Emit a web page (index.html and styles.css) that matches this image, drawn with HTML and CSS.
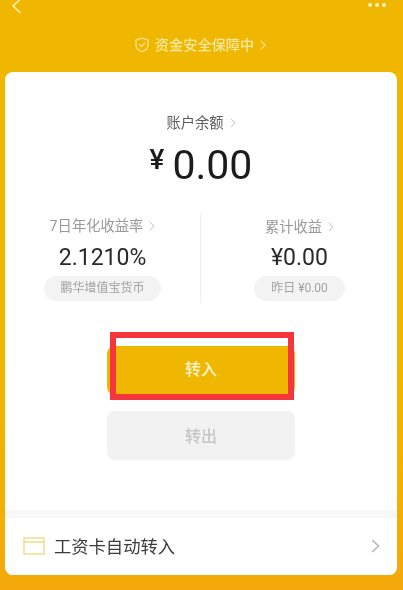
FILE: index.html
```html
<!DOCTYPE html>
<html lang="zh">
<head>
<meta charset="utf-8">
<title>账户余额</title>
<link rel="stylesheet" href="styles.css">
</head>
<body>
<div class="page">
  <header class="header">
    <div class="topbar">
      <svg class="back" viewBox="0 0 12 16" aria-hidden="true"><path d="M10.5 1 3 8l7.5 7"/></svg>
      <div class="dots"><i></i><i></i><i></i></div>
    </div>
    <div class="safe">
      <svg class="shield" viewBox="0 0 14 16" aria-hidden="true"><path d="M7 1.2 13 3v5.2c0 3-2.6 5.2-6 6.6-3.4-1.4-6-3.600-6-6.600V3z"/><path d="M4.300 7.200 6.600 9.400 10 5.800"/></svg>
      <span>资金安全保障中</span>
      <svg class="chev chev-safe" viewBox="0 0 7 12" aria-hidden="true"><path d="M1 1l5 5-5 5"/></svg>
    </div>
  </header>

  <main class="card">
    <section class="balance">
      <div class="balance-label"><span>账户余额</span><svg class="chev chev-gray" viewBox="0 0 7 12" aria-hidden="true"><path d="M1 1l5 5-5 5"/></svg></div>
      <div class="amount"><span class="yen">¥</span><span class="value">0.00</span></div>
    </section>

    <section class="stats">
      <div class="stat">
        <div class="stat-label"><span>7日年化收益率</span><svg class="chev chev-gray" viewBox="0 0 7 12" aria-hidden="true"><path d="M1 1l5 5-5 5"/></svg></div>
        <div class="stat-value">2.1210%</div>
        <div class="pill pill-fund">鹏华增值宝货币</div>
      </div>
      <div class="divider"></div>
      <div class="stat stat-right">
        <div class="stat-label stat-label-low"><span>累计收益</span><svg class="chev chev-gray" viewBox="0 0 7 12" aria-hidden="true"><path d="M1 1l5 5-5 5"/></svg></div>
        <div class="stat-value">¥0.00</div>
        <div class="pill pill-day">昨日 ¥0.00</div>
      </div>
    </section>

    <section class="actions">
      <div class="btn-wrap">
        <button class="btn btn-in">转入</button>
        <div class="highlight"></div>
      </div>
      <button class="btn btn-out">转出</button>
    </section>

    <div class="band"></div>

    <section class="row">
      <svg class="card-icon" viewBox="0 0 22 18" aria-hidden="true"><rect x="1" y="1" width="20" height="16"/><path d="M1 5h20"/></svg>
      <span class="row-text">工资卡自动转入</span>
      <svg class="chev chev-row" viewBox="0 0 9 14" aria-hidden="true"><path d="M1.200 1 7.500 7l-6.300 6"/></svg>
    </section>
  </main>
</div>
</body>
</html>
```

FILE: styles.css
```css
* { box-sizing: border-box; }
html, body { margin: 0; padding: 0; }
body {
  width: 403px;
  height: 590px;
  overflow: hidden;
  font-family: Roboto, "Noto Sans CJK SC", sans-serif;
  background: linear-gradient(180deg, #efb700 0, #efb700 60%, #f2b005 82%, #f5a90c 100%);
}
.page {
  height: 590px;
  display: flex;
  flex-direction: column;
  filter: blur(0.5px);
}
.header { height: 72px; flex: none; }
.topbar {
  height: 14px;
  padding: 0 17px 0 10px;
  display: flex;
  justify-content: space-between;
  overflow: hidden;
}
.back {
  width: 12px;
  height: 16px;
  margin-top: -2px;
  fill: none;
  stroke: #fdf1c4;
  stroke-width: 1.500;
}
.dots { display: flex; gap: 3px; margin-top: 3px; }
.dots i {
  display: block;
  width: 4px;
  height: 4px;
  border-radius: 50%;
  background: #fdf3d0;
}
.safe {
  margin-top: 22px;
  height: 18px;
  padding-right: 2px;
  display: flex;
  align-items: center;
  justify-content: center;
  color: #fae7a0;
  font-size: 14.200px;
  line-height: 18px;
  font-weight: 500;
}
.shield {
  width: 14px;
  height: 16px;
  margin-right: 6px;
  fill: none;
  stroke: #fae7a0;
  stroke-width: 1.200;
}
.chev { fill: none; display: block; flex: none; }
.chev-safe {
  width: 6px;
  height: 10px;
  margin-left: 6px;
  stroke: #fae7a0;
  stroke-width: 1.300;
}
.chev-gray {
  width: 6px;
  height: 10px;
  margin-left: 6px;
  stroke: #c4c4c4;
  stroke-width: 1.200;
}

.card {
  flex: none;
  height: 503px;
  margin: 0 6px 0 5px;
  background: #fff;
  border-radius: 8px;
  overflow: hidden;
  display: flex;
  flex-direction: column;
}
.balance {
  height: 142px;
  flex: none;
  padding-top: 41px;
  display: flex;
  flex-direction: column;
  align-items: center;
}
.balance-label {
  display: flex;
  align-items: center;
  height: 20px;
  font-size: 14.300px;
  line-height: 20px;
  color: #5c5c5c;
}
.amount {
  margin-top: 8px;
  display: flex;
  align-items: flex-start;
  color: #1c1c1c;
  height: 48px;
  line-height: 48px;
}
.yen {
  font-size: 28px;
  font-weight: 500;
  line-height: 38px;
  margin-right: 8px;
}
.value { font-size: 41px; }

.stats {
  height: 89px;
  flex: none;
  display: flex;
}
.stat {
  width: 195px;
  flex: none;
  display: flex;
  flex-direction: column;
  align-items: center;
}
.stat-right { width: 196px; padding-left: 1px; }
.divider {
  width: 1px;
  flex: none;
  background: #efefef;
}
.stat-label {
  height: 20px;
  padding-top: 3px;
  display: flex;
  align-items: center;
  font-size: 14.300px;
  color: #999;
  line-height: 20px;
}
.stat-label-low { padding-top: 5px; }
.stat-value {
  margin-top: 9px;
  height: 30px;
  line-height: 30px;
  font-size: 23px;
  color: #2a2a2a;
}
.pill {
  margin-top: 3px;
  height: 25px;
  line-height: 25px;
  border-radius: 13px;
  background: #f3f3f3;
  color: #a2a2a2;
  font-size: 12px;
  text-align: center;
}
.pill-fund { width: 117px; }
.pill-day { width: 91px; }

.actions {
  flex: none;
  height: 207px;
  padding-top: 43px;
  display: flex;
  flex-direction: column;
  align-items: center;
  gap: 16px;
}
.btn-wrap { position: relative; width: 188px; height: 49px; flex: none; }
.btn {
  display: block;
  width: 188px;
  height: 49px;
  flex: none;
  border: 0;
  padding: 0 0 2px;
  border-radius: 8px;
  font-family: inherit;
  font-size: 16px;
  font-weight: 500;
}
.btn-in { background: #efb700; color: #fdf3d2; padding-bottom: 5px; }
.btn-out { background: #f2f2f2; color: #c6c6c6; }
.highlight {
  position: absolute;
  left: 3px;
  top: -14px;
  width: 184px;
  height: 68px;
  border: 6.500px solid #f5363c;
}

.band { height: 8px; flex: none; background: #f8f8f8; }
.row {
  flex: 1;
  display: flex;
  align-items: center;
  padding: 0 17px 0 18px;
  background: #fff;
}
.card-icon {
  width: 22px;
  height: 18px;
  flex: none;
  margin-top: -1px;
  fill: none;
  stroke: #ecdc82;
  stroke-width: 1.300;
}
.row-text {
  margin-left: 9px;
  font-size: 17.300px;
  color: #3c3c3c;
  flex: 1;
  line-height: 24px;
}
.chev-row {
  width: 9px;
  height: 14px;
  margin-top: -1px;
  stroke: #b5b5b5;
  stroke-width: 1.500;
}
```
